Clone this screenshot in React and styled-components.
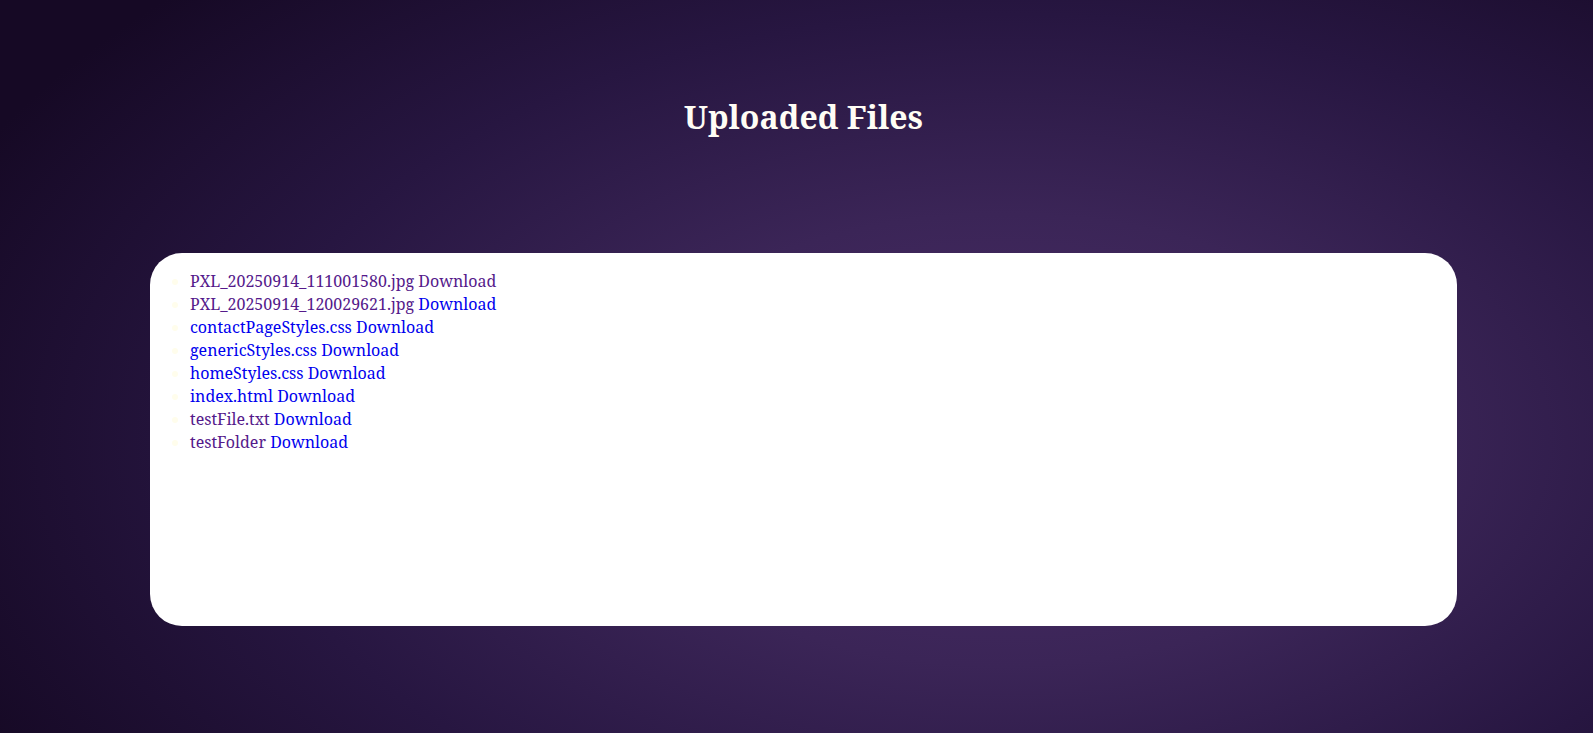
import styled, { createGlobalStyle } from "styled-components";

const GlobalStyle = createGlobalStyle`
  html, body {
    margin: 0;
    padding: 0;
  }
  body {
    font-family: "Noto Serif", "DejaVu Serif", serif;
    min-height: 100vh;
    background: radial-gradient(
      ellipse 72% 88% at 63% 60%,
      #4a2c68 0%,
      #3b2557 35%,
      #271641 66%,
      #160925 100%
    );
    background-color: #160925;
  }
`;

const Page = styled.main`
  min-height: 733px;
  display: flex;
  flex-direction: column;
  padding: 74px 136px 0 150px;
  box-sizing: border-box;
`;

const Title = styled.h1`
  margin: 21px 0 0;
  text-align: center;
  color: #fffdf5;
  font-size: 32px;
  font-weight: 700;
  height: 158px;
`;

const Card = styled.section`
  background: #ffffff;
  border-radius: 32px;
  height: 373px;
`;

const FileList = styled.ul`
  margin: 17px 0 16px;
  padding-left: 40px;
  color: #fffdec;
  font-size: 16px;
  line-height: 23px;
`;

const FileLink = styled.a`
  color: ${(p) => (p.$visited ? "#551a8b" : "#0000ee")};
  text-decoration: none;
`;

const files = [
  { name: "PXL_20250914_111001580.jpg", seen: true, dl: true },
  { name: "PXL_20250914_120029621.jpg", seen: true, dl: false },
  { name: "contactPageStyles.css", seen: false, dl: false },
  { name: "genericStyles.css", seen: false, dl: false },
  { name: "homeStyles.css", seen: false, dl: false },
  { name: "index.html", seen: false, dl: false },
  { name: "testFile.txt", seen: true, dl: false },
  { name: "testFolder", seen: true, dl: false },
];

export default function App() {
  return (
    <>
      <GlobalStyle />
      <Page>
        <Title>Uploaded Files</Title>
        <Card>
          <FileList>
            {files.map((f) => (
              <li key={f.name}>
                <FileLink href="#" $visited={f.seen}>
                  {f.name}
                </FileLink>{" "}
                <FileLink href="#" $visited={f.dl}>
                  Download
                </FileLink>
              </li>
            ))}
          </FileList>
        </Card>
      </Page>
    </>
  );
}
